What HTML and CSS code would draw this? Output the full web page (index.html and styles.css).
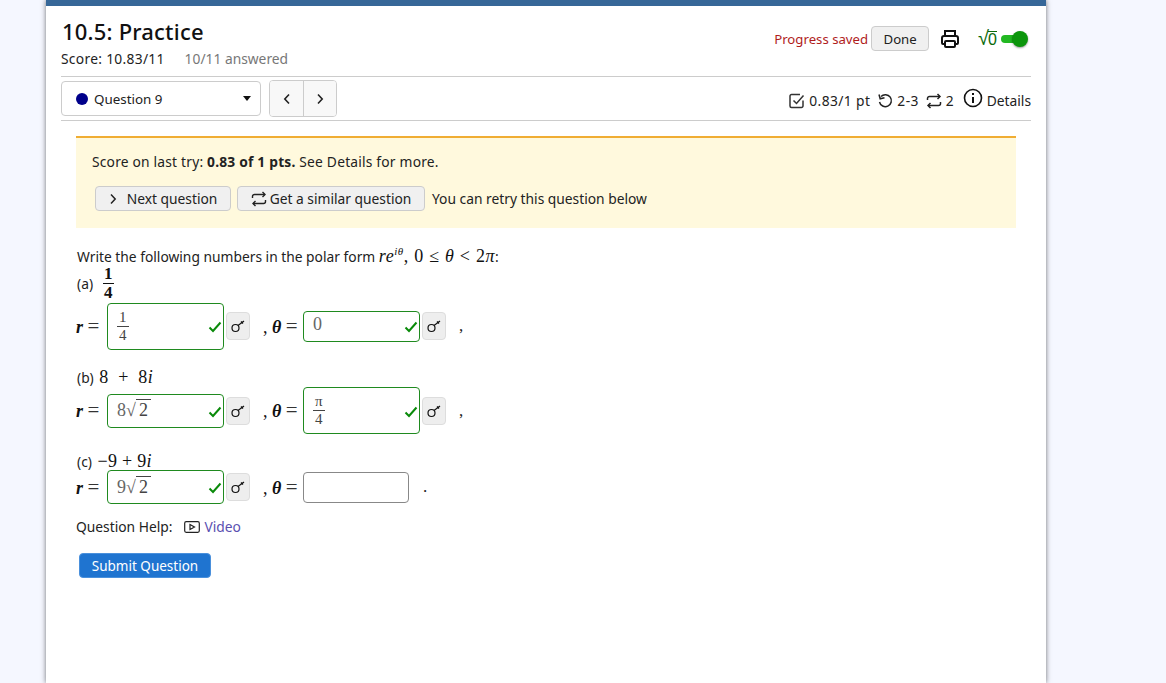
FILE: index.html
```html
<!DOCTYPE html>
<html lang="en">
<head>
    <meta charset="UTF-8">
    <title>10.5: Practice</title>
    <link rel="stylesheet" href="styles.css">
</head>
<body>

<div class="page">
    <div class="header">
        <div class="header-left">
            <h1>10.5: Practice</h1>
            <div class="score">Score: 10.83/11 <span class="answered">10/11 answered</span></div>
        </div>
        <div class="header-right">
            <span class="saved">Progress saved</span>
            <button class="button done">Done</button>
            <svg class="print" width="20" height="20" viewBox="0 0 20 20" fill="none" stroke="#111" stroke-width="2"><path d="M5 7V2h10v5"/><path d="M5 15H3a1 1 0 0 1-1-1V9a2 2 0 0 1 2-2h12a2 2 0 0 1 2 2v5a1 1 0 0 1-1 1h-2"/><rect x="5" y="12" width="10" height="6" rx="1"/></svg>
            <span class="mathtoggle"><span class="root">√</span><span class="zero">0</span></span>
            <span class="toggle"><span class="knob"></span></span>
        </div>
    </div>

    <div class="navrow">
        <div class="select">
            <span class="dot"></span>
            <span class="select-label">Question 9</span>
            <span class="caret"></span>
        </div>
        <div class="arrows">
            <button class="arrow"><svg width="8" height="12" viewBox="0 0 8 12" fill="none" stroke="#222" stroke-width="1.6"><path d="M6 1.500 1.800 6 6 10.500"/></svg></button>
            <button class="arrow"><svg width="8" height="12" viewBox="0 0 8 12" fill="none" stroke="#222" stroke-width="1.6"><path d="M2 1.500 6.200 6 2 10.500"/></svg></button>
        </div>
        <div class="meta">
            <svg width="16" height="16" viewBox="0 0 16 16" fill="none" stroke="#333" stroke-width="1.5"><path d="M14 7.500V13a1.500 1.500 0 0 1-1.500 1.500h-10A1.500 1.500 0 0 1 1 13V3a1.500 1.500 0 0 1 1.500-1.500H11"/><path d="M4.500 7.500 7.500 10.500 14.500 2.500"/></svg>
            <span class="meta-text spaced">0.83/1 pt</span>
            <svg class="meta-icon" width="16" height="16" viewBox="0 0 16 16" fill="none" stroke="#222" stroke-width="1.5"><path d="M4 3.500A6 6 0 1 1 2.500 9"/><path d="M2 1.500 3.200 5.800 7.500 4.800"/></svg>
            <span class="meta-text spaced">2-3</span>
            <svg class="meta-icon" width="16" height="16" viewBox="0 0 16 16" fill="none" stroke="#222" stroke-width="1.5"><path d="M1.500 7V5.500a2 2 0 0 1 2-2H14"/><path d="M11.500 1 14 3.500 11.500 6"/><path d="M14.500 9v1.500a2 2 0 0 1-2 2H2"/><path d="M4.500 10 2 12.500 4.500 15"/></svg>
            <span class="meta-text">2</span>
            <svg class="meta-info" width="20" height="20" viewBox="0 0 20 20" fill="none" stroke="#111" stroke-width="1.600"><circle cx="10" cy="10" r="8.500"/><path d="M10 9v6" stroke-width="2"/><path d="M10 5v2" stroke-width="2"/></svg>
            <span class="meta-text">Details</span>
        </div>
    </div>

    <div class="question">
        <div class="notice">
            <p>Score on last try: <b>0.83 of 1 pts.</b> See Details for more.</p>
            <div class="notice-actions">
                <button class="button action next"><svg width="8" height="12" viewBox="0 0 8 12" fill="none" stroke="#222" stroke-width="1.5"><path d="M2 1.500 6.200 6 2 10.500"/></svg>Next question</button>
                <button class="button action similar"><svg width="16" height="16" viewBox="0 0 16 16" fill="none" stroke="#222" stroke-width="1.4"><path d="M1.500 7V5.500a2 2 0 0 1 2-2H14"/><path d="M11.500 1 14 3.500 11.500 6"/><path d="M14.500 9v1.500a2 2 0 0 1-2 2H2"/><path d="M4.500 10 2 12.500 4.500 15"/></svg>Get a similar question</button>
                <span>You can retry this question below</span>
            </div>
        </div>

        <p class="prompt">Write the following numbers in the polar form <span class="math wide"><i>re<sup>iθ</sup></i>, 0 ≤ <i>θ</i> &lt; 2<i>π</i></span>:</p>

        <div class="part-label part-a">(a) <span class="frac big"><span>1</span><span class="under">4</span></span></div>
        <div class="answers row-a">
            <span class="eq"><i>r</i> <span class="equals">=</span></span>
            <span class="answer tall good"><span class="frac"><span>1</span><span class="under">4</span></span><svg class="check" width="14" height="12" viewBox="0 0 14 12" fill="none" stroke="#0a8a0a" stroke-width="2"><path d="M1.500 6.500 5 10 12.500 1.500"/></svg></span>
            <button class="key"><svg width="16" height="16" viewBox="0 0 16 16" fill="none" stroke="#111" stroke-width="1.200"><circle cx="5.500" cy="10" r="3.500"/><path d="M8 7.500 14 3"/><path d="M11 3.500 13 5.500"/></svg></button>
            <span class="eq second">, <i>θ</i> <span class="equals">=</span></span>
            <span class="answer short good"><span class="value zero-value">0</span><svg class="check" width="14" height="12" viewBox="0 0 14 12" fill="none" stroke="#0a8a0a" stroke-width="2"><path d="M1.500 6.500 5 10 12.500 1.500"/></svg></span>
            <button class="key"><svg width="16" height="16" viewBox="0 0 16 16" fill="none" stroke="#111" stroke-width="1.200"><circle cx="5.500" cy="10" r="3.500"/><path d="M8 7.500 14 3"/><path d="M11 3.500 13 5.500"/></svg></button>
            <span class="tail">,</span>
        </div>

        <div class="part-label part-b">(b) <span class="math">8 &nbsp;+&nbsp; 8<i>i</i></span></div>
        <div class="answers row-b">
            <span class="eq"><i>r</i> <span class="equals">=</span></span>
            <span class="answer mid good"><span class="value">8√<span class="radicand">2</span></span><svg class="check" width="14" height="12" viewBox="0 0 14 12" fill="none" stroke="#0a8a0a" stroke-width="2"><path d="M1.500 6.500 5 10 12.500 1.500"/></svg></span>
            <button class="key"><svg width="16" height="16" viewBox="0 0 16 16" fill="none" stroke="#111" stroke-width="1.200"><circle cx="5.500" cy="10" r="3.500"/><path d="M8 7.500 14 3"/><path d="M11 3.500 13 5.500"/></svg></button>
            <span class="eq second">, <i>θ</i> <span class="equals">=</span></span>
            <span class="answer tall good"><span class="frac"><span>π</span><span class="under">4</span></span><svg class="check" width="14" height="12" viewBox="0 0 14 12" fill="none" stroke="#0a8a0a" stroke-width="2"><path d="M1.500 6.500 5 10 12.500 1.500"/></svg></span>
            <button class="key"><svg width="16" height="16" viewBox="0 0 16 16" fill="none" stroke="#111" stroke-width="1.200"><circle cx="5.500" cy="10" r="3.500"/><path d="M8 7.500 14 3"/><path d="M11 3.500 13 5.500"/></svg></button>
            <span class="tail">,</span>
        </div>

        <div class="part-label part-c">(c) <span class="math">−9 + 9<i>i</i></span></div>
        <div class="answers row-c">
            <span class="eq"><i>r</i> <span class="equals">=</span></span>
            <span class="answer mid good"><span class="value">9√<span class="radicand">2</span></span><svg class="check" width="14" height="12" viewBox="0 0 14 12" fill="none" stroke="#0a8a0a" stroke-width="2"><path d="M1.500 6.500 5 10 12.500 1.500"/></svg></span>
            <button class="key"><svg width="16" height="16" viewBox="0 0 16 16" fill="none" stroke="#111" stroke-width="1.200"><circle cx="5.500" cy="10" r="3.500"/><path d="M8 7.500 14 3"/><path d="M11 3.500 13 5.500"/></svg></button>
            <span class="eq second">, <i>θ</i> <span class="equals">=</span></span>
            <span class="answer empty"></span>
            <span class="tail period">.</span>
        </div>

        <div class="help">
            <span>Question Help:</span>
            <svg width="16" height="12" viewBox="0 0 16 12" fill="none" stroke="#222" stroke-width="1.200"><rect x="0.700" y="0.700" width="14.600" height="10.600" rx="1.500"/><path d="M6 3.500v5L10.500 6z"/></svg>
            <a class="video" href="#">Video</a>
        </div>

        <button class="submit">Submit Question</button>
    </div>
</div>

</body>
</html>
```

FILE: styles.css
```css
html, body {
    height: 100%;
    overflow: hidden;
}
body {
    font-family: "Noto Sans", sans-serif;
    font-size: 13.8px;
    margin: 0;
    padding: 0;
    background-color: #f5f7ff;
    color: #222;
}
button {
    font-family: inherit;
}
.page {
    width: 1000px;
    height: 677px;
    margin-left: 46px;
    background-color: #fff;
    border-top: 6px solid #366798;
    box-shadow: 0 0 5px rgba(0, 0, 0, 0.55);
}
.header {
    display: flex;
    justify-content: space-between;
    margin: 0 15px;
    height: 70px;
    border-bottom: 1px solid #ccc;
}
h1 {
    font-size: 22px;
    font-weight: 500;
    line-height: 28px;
    letter-spacing: 0.2px;
    margin: 11px 0 0 1px;
    color: #111;
}
.score {
    margin-top: 4px;
    line-height: 20px;
    letter-spacing: 0.3px;
}
.answered {
    color: #777;
    margin-left: 16px;
    letter-spacing: 0;
}
.header-right {
    display: flex;
    align-items: center;
    height: 25px;
    margin-top: 20px;
}
.saved {
    color: #b01c1c;
    font-size: 13.2px;
}
.button {
    background-color: #f0f0f0;
    border: 1px solid #ccc;
    border-radius: 4px;
    color: #222;
    font-size: 13.8px;
    cursor: pointer;
}
.done {
    width: 58px;
    height: 25px;
    margin-left: 3px;
    padding: 0;
    font-size: 13.2px;
}
.print {
    margin-left: 11px;
}
.mathtoggle {
    display: flex;
    align-items: center;
    color: #0a6a0a;
    margin-left: 18px;
    font-family: "Liberation Sans", sans-serif;
}
.root {
    font-size: 20px;
}
.zero {
    font-size: 16px;
    border-top: 1px solid #0a6a0a;
    line-height: 15px;
    margin-left: -1px;
}
.toggle {
    position: relative;
    width: 20px;
    height: 8px;
    margin-left: 4px;
    margin-right: 10px;
    background-color: #22b822;
    border-radius: 4px;
}
.knob {
    position: absolute;
    right: -7px;
    top: -4px;
    width: 16px;
    height: 16px;
    border-radius: 50%;
    background-color: #0c960c;
    box-shadow: 0 1px 2px rgba(0, 0, 0, 0.4);
}
.navrow {
    display: flex;
    align-items: center;
    margin: 0 15px;
    height: 43px;
    border-bottom: 1px solid #ccc;
}
.select {
    display: flex;
    align-items: center;
    box-sizing: border-box;
    width: 200px;
    height: 35px;
    border: 1px solid #ccc;
    border-radius: 4px;
    padding: 0 9px 0 14px;
}
.dot {
    width: 12px;
    height: 12px;
    border-radius: 50%;
    background-color: #00008b;
    margin-right: 6px;
}
.select-label {
    flex: 1;
    font-size: 13.4px;
}
.caret {
    border-left: 4px solid transparent;
    border-right: 4px solid transparent;
    border-top: 5px solid #111;
}
.arrows {
    display: flex;
    margin-left: 8px;
    height: 35px;
    border: 1px solid #ccc;
    border-radius: 4px;
    overflow: hidden;
}
.arrow {
    width: 33px;
    padding: 0;
    background-color: #f8f8f8;
    border: none;
    display: flex;
    align-items: center;
    justify-content: center;
}
.arrow + .arrow {
    border-left: 1px solid #ccc;
}
.meta {
    display: flex;
    align-items: center;
    margin-left: auto;
    padding-top: 4px;
}
.meta-text {
    margin-left: 4px;
}
.spaced {
    letter-spacing: 0.4px;
}
.meta-icon {
    margin-left: 7px;
}
.meta-info {
    margin-left: 9px;
    margin-top: -6px;
}
.question {
    padding: 15px 30px 0;
}
.notice {
    box-sizing: border-box;
    height: 92px;
    background-color: #fff9dd;
    border-top: 2px solid #f0ad33;
    padding: 15px 16px 0;
}
.notice p {
    margin: 0;
    line-height: 18px;
    letter-spacing: 0.2px;
}
.notice-actions {
    display: flex;
    align-items: center;
    margin-top: 15px;
    margin-left: 3px;
}
.action {
    display: flex;
    align-items: center;
    justify-content: center;
    height: 25px;
    padding: 0;
    margin-right: 6px;
}
.next {
    width: 136px;
}
.next svg {
    margin-right: 10px;
}
.similar {
    width: 188px;
    margin-right: 7px;
}
.similar svg {
    margin-right: 3px;
}
.prompt {
    margin: 17px 0 0 1px;
    line-height: 22px;
}
.math, .eq, .frac, .value, .tail {
    font-family: "Liberation Serif", serif;
}
.math {
    font-size: 18px;
    color: #111;
    letter-spacing: 0.3px;
    margin-left: 2px;
}
.math.wide {
    margin-left: 0;
    letter-spacing: 0.5px;
    word-spacing: 0.5px;
}
.math sup {
    font-size: 11px;
    line-height: 0;
}
.frac {
    display: inline-flex;
    flex-direction: column;
    align-items: center;
    vertical-align: middle;
    font-size: 15px;
    line-height: 17px;
    color: #444;
}
.frac .under {
    border-top: 1px solid #444;
    padding: 0 2px;
}
.frac.big {
    font-size: 17px;
    line-height: 18px;
    color: #111;
    font-weight: 700;
}
.frac.big .under {
    border-top-color: #111;
    padding: 0 1px;
}
.part-label {
    margin-left: 1px;
}
.part-a {
    display: flex;
    align-items: center;
    gap: 10px;
    height: 38px;
    margin-top: -4px;
}
.part-b {
    margin-top: 16px;
    line-height: 22px;
}
.part-c {
    margin-top: 16px;
    line-height: 22px;
}
.answers {
    display: flex;
    align-items: center;
}
.row-a {
    height: 48px;
}
.row-b {
    height: 47px;
    margin-top: -2px;
}
.row-c {
    height: 34px;
    margin-top: -3px;
}
.eq {
    width: 31px;
    font-size: 18px;
    color: #111;
    white-space: nowrap;
}
.eq i {
    font-weight: 700;
}
.equals {
    font-size: 21px;
    color: #333;
    font-weight: 400;
}
.eq.second {
    width: 40px;
    margin-left: 13px;
}
.answer {
    position: relative;
    box-sizing: border-box;
    display: flex;
    align-items: center;
    width: 117px;
    padding-left: 9px;
    border: 1px solid #888;
    border-radius: 4px;
}
.good {
    border-color: #1f8a1f;
}
.tall {
    height: 47px;
}
.short {
    height: 31px;
}
.mid {
    height: 34px;
}
.empty {
    width: 106px;
    height: 31px;
}
.value {
    font-size: 18px;
    color: #666;
}
.zero-value {
    margin-top: -4px;
}
.radicand {
    border-top: 1px solid #444;
    padding: 0 3px;
    color: #444;
}
.check {
    position: absolute;
    right: 1px;
    top: 50%;
    margin-top: -5px;
}
.key {
    display: flex;
    align-items: center;
    justify-content: center;
    width: 24px;
    height: 28px;
    margin-left: 2px;
    padding: 0;
    background-color: #eee;
    border: 1px solid #ddd;
    border-radius: 4px;
}
.tail {
    font-size: 17px;
    margin-left: 13px;
}
.period {
    margin-left: 14px;
}
.help {
    display: flex;
    align-items: center;
    margin-top: 13px;
    line-height: 20px;
}
.help svg {
    margin-left: 12px;
    margin-right: 4px;
}
.video {
    color: #5a50b0;
    text-decoration: none;
}
.submit {
    display: block;
    width: 132px;
    height: 25px;
    margin: 16px 0 0 3px;
    padding: 0;
    background-color: #1f74d0;
    border: 1px solid #4a90dc;
    border-radius: 4px;
    color: #fff;
    font-size: 13.5px;
}
```
